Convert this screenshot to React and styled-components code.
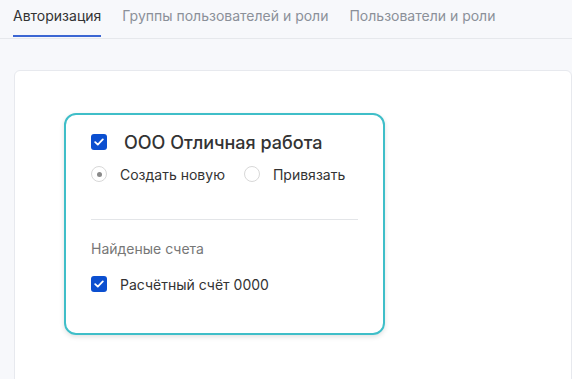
import React from "react";
import styled, { createGlobalStyle } from "styled-components";

const Global = createGlobalStyle`
  html, body { margin: 0; padding: 0; }
  body {
    background: #f7f8fb;
    font-family: Inter, "Noto Sans", sans-serif;
    color: #333;
    overflow: hidden;
  }
`;

const Page = styled.div`
  width: 572px;
  height: 379px;
  overflow: hidden;
`;

const Tabs = styled.div`
  display: flex;
  gap: 21px;
  padding-left: 13px;
  border-bottom: 1px solid #e6e8ec;
  height: 38px;
`;

const Tab = styled.div`
  font-size: 14px;
  line-height: 32px;
  color: ${(p) => (p.active ? "#333" : "#8b9099")};
  border-bottom: 2px solid ${(p) => (p.active ? "#3c66d3" : "transparent")};
  height: 37px;
  box-sizing: border-box;
  white-space: nowrap;
`;

const Panel = styled.div`
  margin: 31px 0 0 14px;
  background: #fff;
  border: 1px solid #e7e9ee;
  border-radius: 6px;
  height: 400px;
  padding: 42px 0 0 49px;
`;

const Card = styled.div`
  width: 321px;
  height: 222px;
  box-sizing: border-box;
  border: 2px solid #3fbec8;
  border-radius: 12px;
  box-shadow: 0 2px 5px rgba(0, 0, 0, 0.12);
  padding: 15px 25px 0 25px;
  display: flex;
  flex-direction: column;
`;

const Row = styled.div`
  display: flex;
  align-items: center;
  height: ${(p) => p.h || 20}px;
  margin-top: ${(p) => p.mt || 0}px;
  white-space: nowrap;
`;

const Check = styled.span`
  width: 16px;
  height: 16px;
  border-radius: 3px;
  background: #0b4fd0;
  display: inline-flex;
  align-items: center;
  justify-content: center;
  flex-shrink: 0;
  margin-right: ${(p) => p.gap}px;
`;

const Title = styled.span`
  font-size: 18px;
  font-weight: 500;
  color: #333;
`;

const Label = styled.span`
  font-size: 14px;
  color: #333;
  white-space: nowrap;
`;

const RadioItem = styled.span`
  display: inline-flex;
  align-items: center;
  flex-shrink: 0;
  margin-right: 19px;
`;

const Radio = styled.span`
  width: 16px;
  height: 16px;
  box-sizing: border-box;
  border-radius: 50%;
  border: 1px solid #d8d8d8;
  display: inline-flex;
  align-items: center;
  justify-content: center;
  flex-shrink: 0;
  margin-right: 13px;
  &::after {
    content: "";
    width: 5px;
    height: 5px;
    border-radius: 50%;
    background: ${(p) => (p.checked ? "#8a8a8a" : "transparent")};
  }
`;

const Divider = styled.div`
  height: 1px;
  background: #e3e5e8;
  margin-top: 35px;
`;

const Sub = styled.div`
  font-size: 14px;
  color: #777;
  line-height: 20px;
  margin-top: 19px;
`;

const Tick = () => (
  <svg width="10" height="8" viewBox="0 0 10 8" fill="none">
    <path d="M1.2 4.2 L3.8 6.6 L8.8 1.4" stroke="#fff" strokeWidth="1.8" strokeLinecap="round" strokeLinejoin="round" />
  </svg>
);

export default function App() {
  return (
    <Page>
      <Global />
      <Tabs>
        <Tab active>Авторизация</Tab>
        <Tab>Группы пользователей и роли</Tab>
        <Tab>Пользователи и роли</Tab>
      </Tabs>
      <Panel>
        <Card>
          <Row h={24}>
            <Check gap={17}><Tick /></Check>
            <Title>ООО Отличная работа</Title>
          </Row>
          <Row mt={10}>
            <RadioItem><Radio checked /><Label>Создать новую</Label></RadioItem>
            <RadioItem><Radio /><Label>Привязать</Label></RadioItem>
          </Row>
          <Divider />
          <Sub>Найденые счета</Sub>
          <Row mt={15}>
            <Check gap={13}><Tick /></Check>
            <Label>Расчётный счёт 0000</Label>
          </Row>
        </Card>
      </Panel>
    </Page>
  );
}
